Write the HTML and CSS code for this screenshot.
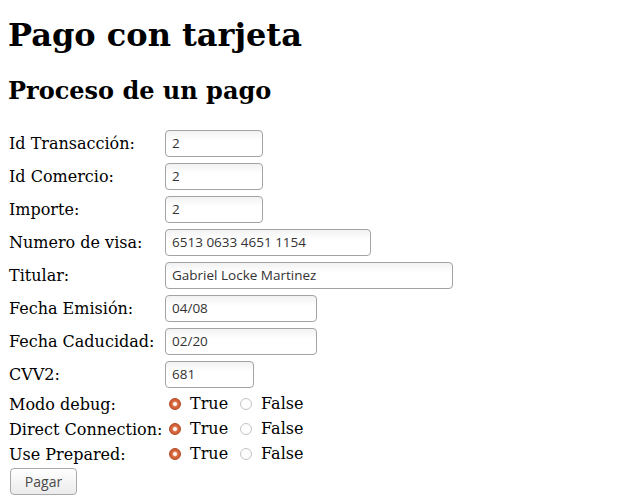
FILE: index.html
```html
<!DOCTYPE html>
<html lang="es">
<head>
<meta charset="utf-8">
<title>Pago con tarjeta</title>
<link rel="stylesheet" href="styles.css">
</head>
<body>
<h1>Pago con tarjeta</h1>
<h2>Proceso de un pago</h2>
<form class="pay">
  <div class="row"><label class="lbl">Id Transacción:</label><input class="field w-s" type="text" value="2"></div>
  <div class="row"><label class="lbl">Id Comercio:</label><input class="field w-s" type="text" value="2"></div>
  <div class="row"><label class="lbl">Importe:</label><input class="field w-s" type="text" value="2"></div>
  <div class="row"><label class="lbl">Numero de visa:</label><input class="field w-l" type="text" value="6513 0633 4651 1154"></div>
  <div class="row"><label class="lbl">Titular:</label><input class="field w-xl" type="text" value="Gabriel Locke Martinez"></div>
  <div class="row"><label class="lbl">Fecha Emisión:</label><input class="field w-m" type="text" value="04/08"></div>
  <div class="row"><label class="lbl">Fecha Caducidad:</label><input class="field w-m" type="text" value="02/20"></div>
  <div class="row"><label class="lbl">CVV2:</label><input class="field w-xs" type="text" value="681"></div>
  <div class="row opt"><span class="lbl">Modo debug:</span><span class="choices"><input class="radio" type="radio" name="debug" checked><span class="txt">True</span><input class="radio" type="radio" name="debug"><span class="txt">False</span></span></div>
  <div class="row opt"><span class="lbl">Direct Connection:</span><span class="choices"><input class="radio" type="radio" name="direct" checked><span class="txt">True</span><input class="radio" type="radio" name="direct"><span class="txt">False</span></span></div>
  <div class="row opt"><span class="lbl">Use Prepared:</span><span class="choices"><input class="radio" type="radio" name="prep" checked><span class="txt">True</span><input class="radio" type="radio" name="prep"><span class="txt">False</span></span></div>
  <button class="btn" type="button">Pagar</button>
</form>
</body>
</html>
```
FILE: styles.css
```css
html, body {
  background: #ffffff;
}
body {
  margin: 8px;
  font-family: "DejaVu Serif", serif;
  font-size: 16px;
  color: #000;
}
h1 {
  font-size: 32px;
  font-weight: bold;
  margin: 8.44px 0 21.44px;
}
h2 {
  font-size: 24px;
  font-weight: bold;
  margin: 20.44px 0 22px;
}
.pay {
  margin: 0 0 0 1px;
}
.row {
  display: flex;
  align-items: center;
  height: 33px;
}
.row.opt {
  box-sizing: border-box;
  height: 25px;
  padding-top: 2px;
}
.lbl {
  width: 156px;
  flex: none;
}
.field {
  box-sizing: border-box;
  height: 27px;
  margin: 0;
  padding: 0 6px;
  border: 1px solid #a3a3a3;
  border-radius: 4px;
  background: linear-gradient(#f2f2f2, #ffffff 40%);
  font-family: "Open Sans", sans-serif;
  font-size: 13.5px;
  color: #333;
  outline: none;
}
.w-s { width: 98px; }
.w-l { width: 206px; }
.w-xl { width: 288px; }
.w-m { width: 152px; }
.w-xs { width: 89px; }
.choices {
  display: flex;
  align-items: center;
}
.radio {
  appearance: none;
  -webkit-appearance: none;
  box-sizing: border-box;
  width: 12px;
  height: 12px;
  margin: 0 9px 0 4px;
  border-radius: 50%;
  border: 1px solid #c4c4c4;
  background: #fdfdfd;
}
.radio + .txt + .radio {
  margin-left: 12px;
}
.radio:checked {
  border: 1px solid #b2461f;
  background: radial-gradient(circle, #ffffff 0, #fbe9e0 1.6px, #d86a42 2.8px, #c8552b 100%);
}
.txt {
  line-height: 18px;
}
.btn {
  box-sizing: border-box;
  display: block;
  width: 67px;
  height: 27px;
  margin: 2px 0 0 1px;
  padding: 0;
  border: 1px solid #a9a9a9;
  border-radius: 4px;
  background: linear-gradient(#ffffff, #ebebeb);
  font-family: "Open Sans", sans-serif;
  font-size: 14px;
  color: #4a4a4a;
}
```
